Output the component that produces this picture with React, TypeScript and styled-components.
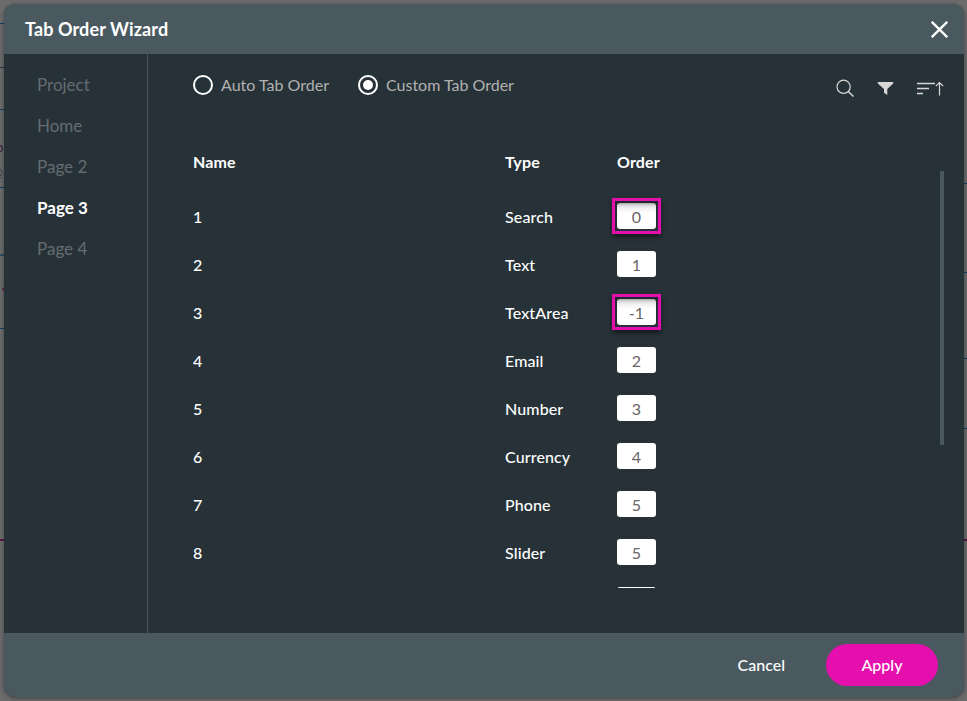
import React from 'react';
import styled, { createGlobalStyle } from 'styled-components';

const GlobalStyle = createGlobalStyle`
  * { box-sizing: border-box; }
  html, body, #root { height: 100%; }
  body {
    margin: 0;
    overflow: hidden;
    font-family: Lato, "Open Sans", sans-serif;
    background: #696969;
  }
`;

const Backdrop = styled.div`
  position: relative;
  width: 967px;
  height: 701px;
  padding: 4px 3px 4px 4px;
  background: #6c6c6c;
  overflow: hidden;
`;

const Rule = styled.span<{ $y: number; $color?: string; $right?: boolean; $thick?: number }>`
  position: absolute;
  top: ${(p) => p.$y}px;
  ${(p) => (p.$right ? 'right: 0;' : 'left: 0;')}
  width: 5px;
  height: ${(p) => p.$thick ?? 1}px;
  background: ${(p) => p.$color ?? '#0d4166'};
`;

const Fragment = styled.span<{ $y: number; $x: number; $color: string }>`
  position: absolute;
  top: ${(p) => p.$y}px;
  left: ${(p) => p.$x}px;
  font-size: 13px;
  line-height: 16px;
  color: ${(p) => p.$color};
`;

const Dialog = styled.section`
  position: relative;
  display: flex;
  flex-direction: column;
  height: 693px;
  border-radius: 12px;
  overflow: hidden;
  background: #273238;
  color: #fff;
  box-shadow: 0 1px 5px rgba(0, 0, 0, 0.4);
`;

const Header = styled.header`
  display: flex;
  align-items: center;
  justify-content: space-between;
  flex: 0 0 50px;
  padding: 0 16px 0 21px;
  background: #4a595f;
`;

const Title = styled.h1`
  margin: 0;
  font-size: 18px;
  line-height: 24px;
  font-weight: 700;
  letter-spacing: 0.12px;
`;

const IconButton = styled.button`
  display: flex;
  padding: 0;
  border: 0;
  background: none;
  color: inherit;
`;

const Body = styled.div`
  display: flex;
  flex: 1;
  min-height: 0;
`;

const Sidebar = styled.nav`
  display: flex;
  flex-direction: column;
  width: 144px;
  padding: 10px 0 0 33px;
  border-right: 1px solid #4a555b;
`;

const PageLink = styled.a<{ $active?: boolean }>`
  height: 41px;
  line-height: 41px;
  font-size: 17px;
  font-weight: ${(p) => (p.$active ? 700 : 400)};
  color: ${(p) => (p.$active ? '#fff' : '#656c71')};
`;

const Main = styled.main`
  display: flex;
  flex-direction: column;
  flex: 1;
  padding: 0 20px 0 45px;
`;

const Toolbar = styled.div`
  display: flex;
  justify-content: space-between;
  height: 83px;
  padding-top: 19px;
`;

const RadioGroup = styled.div`
  display: flex;
  gap: 29px;
  height: 24px;
`;

const RadioLabel = styled.label`
  display: flex;
  align-items: center;
  gap: 8px;
  font-size: 16px;
  line-height: 24px;
  color: #b1b1b1;
`;

const RadioMark = styled.span<{ $checked?: boolean }>`
  display: flex;
  align-items: center;
  justify-content: center;
  width: 20px;
  height: 20px;
  border: 2px solid #fff;
  border-radius: 50%;

  &::after {
    content: '';
    display: ${(p) => (p.$checked ? 'block' : 'none')};
    width: 10px;
    height: 10px;
    border-radius: 50%;
    background: #fff;
  }
`;

const Tools = styled.div`
  display: flex;
  align-items: flex-start;
  gap: 23px;
  padding: 6px 0 0;
  color: #d8d8d8;
`;

const TableArea = styled.div`
  display: flex;
  justify-content: space-between;
`;

const Table = styled.div`
  width: 490px;
  height: 451px;
  overflow: hidden;
`;

const Row = styled.div<{ $head?: boolean }>`
  display: grid;
  grid-template-columns: 312px 112px 60px;
  align-items: center;
  height: ${(p) => (p.$head ? 50 : 48)}px;
  margin-bottom: ${(p) => (p.$head ? 6 : 0)}px;
  font-size: 16px;
  font-weight: ${(p) => (p.$head ? 700 : 500)};
  line-height: 24px;
  letter-spacing: 0.12px;
`;

const OrderCell = styled.div`
  position: relative;
  width: 39px;
  height: 26px;
  margin-bottom: 2px;
`;

const OrderInput = styled.div<{ $marked?: boolean }>`
  height: 26px;
  border-radius: 3px;
  background: ${(p) =>
    p.$marked ? 'linear-gradient(#c3c4c5, #f0f0f0 5px, #fff 10px)' : '#fff'};
  color: #6b6365;
  font-size: 16px;
  font-weight: 400;
  line-height: 28px;
  text-align: center;
`;

const Highlight = styled.span`
  position: absolute;
  inset: -5px;
  border: 3px solid #e50fad;
  box-shadow: 0 3px 5px rgba(0, 0, 0, 0.5), inset 0 2px 3px rgba(0, 0, 0, 0.3);
`;

const Scrollbar = styled.div`
  width: 4px;
  height: 274px;
  margin-top: 34px;
  background: #4a595f;
`;

const Footer = styled.footer`
  display: flex;
  align-items: center;
  justify-content: flex-end;
  gap: 41px;
  flex: 0 0 64px;
  padding-right: 26px;
  background: #4a595f;
`;

const Button = styled.button<{ $primary?: boolean }>`
  width: ${(p) => (p.$primary ? '112px' : 'auto')};
  height: 42px;
  padding: 0;
  border: 0;
  border-radius: 21px;
  background: ${(p) => (p.$primary ? '#e50fad' : 'none')};
  color: #fff;
  font: 500 16px/24px Lato, sans-serif;
`;

const pages = ['Project', 'Home', 'Page 2', 'Page 3', 'Page 4'];

const rows = [
  { type: 'Search', order: '0', marked: true },
  { type: 'Text', order: '1' },
  { type: 'TextArea', order: '-1', marked: true },
  { type: 'Email', order: '2' },
  { type: 'Number', order: '3' },
  { type: 'Currency', order: '4' },
  { type: 'Phone', order: '5' },
  { type: 'Slider', order: '5' },
  { type: '', order: '' },
];

const CloseIcon = () => (
  <svg width="17" height="17" viewBox="0 0 17 17" fill="none" stroke="currentColor" strokeWidth="2.3">
    <path d="M.8.8l15.4 15.4M16.2.8L.8 16.2" />
  </svg>
);

const SearchIcon = () => (
  <svg width="18" height="18" viewBox="0 0 18 18" fill="none" stroke="currentColor" strokeWidth="1.2">
    <circle cx="7.6" cy="7.8" r="6.6" />
    <path d="M12.3 12.5l5.2 5" strokeWidth="1.5" />
  </svg>
);

const FilterIcon = () => (
  <svg width="17" height="18" viewBox="0 0 17 18" fill="currentColor">
    <path d="M.8 3h15.4v1.6L10.3 10v6L7 13.7V10L.8 4.6z" />
  </svg>
);

const SortIcon = () => (
  <svg width="27" height="18" viewBox="0 0 27 18" fill="none" stroke="currentColor">
    <path d="M0 4.5h18M0 9.5h12M0 14.5h6" strokeWidth="1.4" />
    <path d="M22.5 16.5V3.5M18.8 7.2l3.7-3.7 3.7 3.7" strokeWidth="1.2" />
  </svg>
);

export default function App() {
  return (
    <>
      <GlobalStyle />
      <Backdrop>
        <Rule $y={23} />
        <Rule $y={67} $color="#30383b" />
        <Rule $y={109} />
        <Rule $y={187} />
        <Rule $y={254} $color="#2c5064" $thick={2} />
        <Rule $y={328} />
        <Rule $y={539} $color="#5a1746" $thick={2} />
        <Rule $right $y={183} />
        <Rule $right $y={272} />
        <Rule $right $y={358} />
        <Rule $right $y={428} />
        <Rule $right $y={539} $color="#5a1746" $thick={2} />
        <Fragment $x={-4} $y={139} $color="#341d3b">o</Fragment>
        <Fragment $x={-8} $y={164} $color="#3c3c3c">@</Fragment>
        <Fragment $x={1} $y={284} $color="#5a1746">*</Fragment>
        <Dialog>
          <Header>
            <Title>Tab Order Wizard</Title>
            <IconButton aria-label="Close">
              <CloseIcon />
            </IconButton>
          </Header>
          <Body>
            <Sidebar>
              {pages.map((page) => (
                <PageLink key={page} $active={page === 'Page 3'}>
                  {page}
                </PageLink>
              ))}
            </Sidebar>
            <Main>
              <Toolbar>
                <RadioGroup>
                  <RadioLabel>
                    <RadioMark />
                    Auto Tab Order
                  </RadioLabel>
                  <RadioLabel>
                    <RadioMark $checked />
                    Custom Tab Order
                  </RadioLabel>
                </RadioGroup>
                <Tools>
                  <SearchIcon />
                  <FilterIcon />
                  <SortIcon />
                </Tools>
              </Toolbar>
              <TableArea>
                <Table>
                  <Row $head>
                    <span>Name</span>
                    <span>Type</span>
                    <span>Order</span>
                  </Row>
                  {rows.map((row, i) => (
                    <Row key={i}>
                      <span>{row.type && i + 1}</span>
                      <span>{row.type}</span>
                      <OrderCell>
                        <OrderInput $marked={row.marked}>{row.order}</OrderInput>
                        {row.marked && <Highlight />}
                      </OrderCell>
                    </Row>
                  ))}
                </Table>
                <Scrollbar />
              </TableArea>
            </Main>
          </Body>
          <Footer>
            <Button>Cancel</Button>
            <Button $primary>Apply</Button>
          </Footer>
        </Dialog>
      </Backdrop>
    </>
  );
}
